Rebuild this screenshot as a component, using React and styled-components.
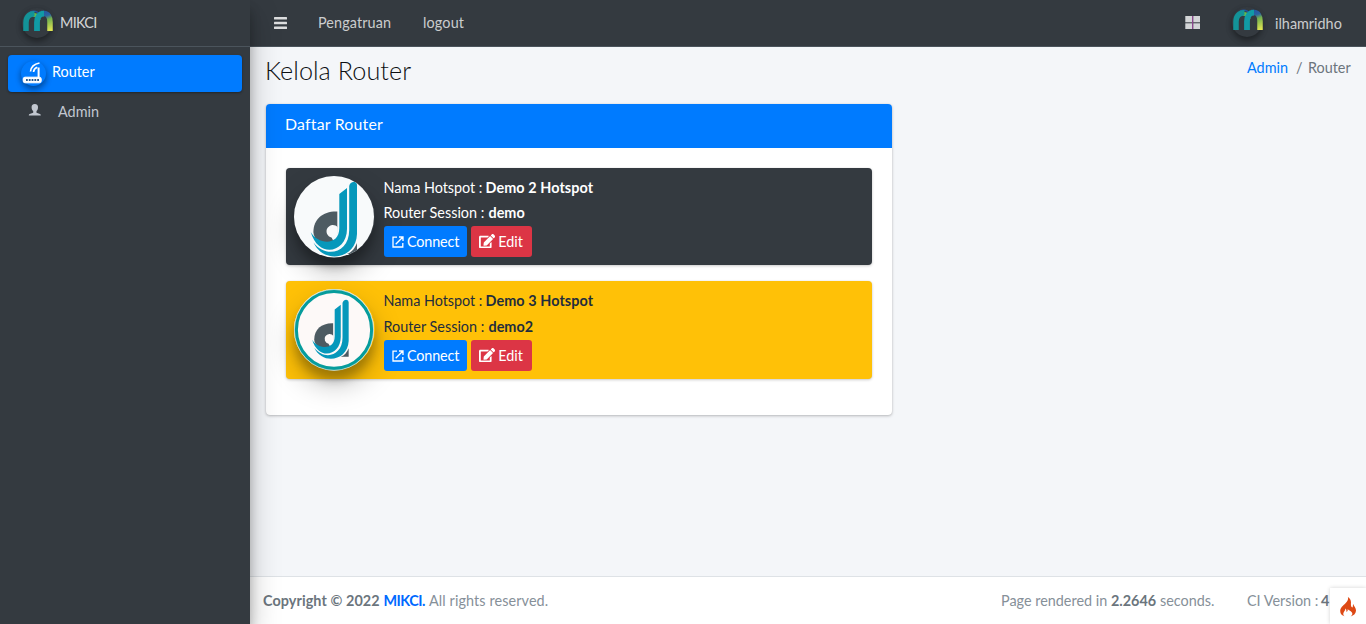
import React from "react";
import styled, { createGlobalStyle } from "styled-components";

const GlobalStyle = createGlobalStyle`
  *, *::before, *::after { box-sizing: border-box; }
  body {
    margin: 0;
    font-family: Lato, "Open Sans", sans-serif;
    font-size: 14.4px;
    line-height: 21.6px;
    color: #212529;
    background: #f4f6f9;
    overflow: hidden;
  }
  a { text-decoration: none; color: #007bff; }
`;

const Page = styled.div`
  display: flex;
  height: 624px;
  width: 1366px;
`;

const Sidebar = styled.aside`
  width: 250px;
  flex: none;
  background: #343a40;
  position: relative;
  z-index: 2;
  box-shadow: 0 14px 28px rgba(0, 0, 0, 0.25), 0 10px 10px rgba(0, 0, 0, 0.22);
`;

const Brand = styled.a`
  display: flex;
  height: 47px;
  padding: 8px 0 0 22px;
  border-bottom: 1px solid #4b545c;
  color: rgba(255, 255, 255, 0.8);
`;

const BrandName = styled.span`
  padding: 4px 0 0 8px;
`;

const Menu = styled.nav`
  display: flex;
  flex-direction: column;
  gap: 3px;
  padding: 8px 8px 0;
`;

const MenuLink = styled.a`
  display: flex;
  height: 37px;
  padding: ${(p) => (p.$active ? "6px 0 0 13px" : "5px 0 0 20px")};
  gap: ${(p) => (p.$active ? "6px" : "16px")};
  border-radius: 4px;
  color: ${(p) => (p.$active ? "#fff" : "#c2c7d0")};
  background: ${(p) => (p.$active ? "#007bff" : "transparent")};
  box-shadow: ${(p) => (p.$active ? "0 1px 3px rgba(0,0,0,.12), 0 1px 2px rgba(0,0,0,.24)" : "none")};
`;

const MenuLabel = styled.span`
  padding-top: ${(p) => p.$top || 0}px;
`;

const RoundPicture = styled.span`
  display: block;
  flex: none;
  width: ${(p) => p.$size}px;
  height: ${(p) => p.$size}px;
  border-radius: 50%;
  box-shadow: ${(p) =>
    p.$deep
      ? "0 14px 28px rgba(0,0,0,.25), 0 10px 10px rgba(0,0,0,.22)"
      : "0 3px 6px rgba(0,0,0,.22), 0 3px 6px rgba(0,0,0,.26)"};
  svg { display: block; }
`;

const Main = styled.div`
  flex: 1;
  display: flex;
  flex-direction: column;
`;

const Navbar = styled.header`
  display: flex;
  height: 47px;
  background: #343a40;
  border-bottom: 1px solid #4b545c;
  padding: 0 24px;
  color: rgba(255, 255, 255, 0.75);
`;

const NavItem = styled.a`
  display: flex;
  padding-top: ${(p) => p.$top ?? 12}px;
  margin-right: ${(p) => p.$gap || 0}px;
  color: inherit;
`;

const Spacer = styled.span`
  flex: 1;
`;

const ContentHeader = styled.div`
  display: flex;
  justify-content: space-between;
  height: 57px;
  padding: 8px 16px 0 15px;
`;

const Title = styled.h1`
  margin: 0;
  font-size: 25.2px;
  font-weight: 300;
  line-height: 30px;
  color: #0c0f12;
`;

const Breadcrumb = styled.nav`
  display: flex;
  padding-top: 2px;
  color: #6c757d;
`;

const Card = styled.section`
  width: 626px;
  height: 311px;
  margin-left: 16px;
  background: #fff;
  border-radius: 4px;
  box-shadow: 0 0 1px rgba(0, 0, 0, 0.125), 0 1px 3px rgba(0, 0, 0, 0.25);
`;

const CardHeader = styled.h3`
  margin: 0;
  height: 44px;
  padding: 8px 19px;
  border-radius: 4px 4px 0 0;
  background: #007bff;
  color: #fff;
  font-size: 15.84px;
  line-height: 24px;
  font-weight: 400;
`;

const CardBody = styled.div`
  display: flex;
  flex-direction: column;
  gap: 16px;
  padding: 20px;
`;

const RouterBox = styled.article`
  display: flex;
  height: ${(p) => (p.$dark ? 97 : 98)}px;
  padding: 8px;
  gap: 9px;
  border-radius: 4px;
  background: ${(p) => (p.$dark ? "#343a40" : "#ffc107")};
  color: ${(p) => (p.$dark ? "#fff" : "#1f2d3d")};
  box-shadow: 0 0 1px rgba(0, 0, 0, 0.125), 0 1px 3px rgba(0, 0, 0, 0.2);
`;

const RouterInfo = styled.div`
  display: flex;
  flex-direction: column;
  padding-top: 1px;
`;

const InfoLine = styled.div`
  height: ${(p) => p.$h || 25}px;
  display: flex;
  margin-left: -0.5px;
`;

const Buttons = styled.div`
  display: flex;
  gap: 4px;
  margin-top: -1px;
`;

const Button = styled.a`
  display: flex;
  width: ${(p) => p.$w}px;
  height: 31px;
  padding: 5px 8px 0;
  border-radius: 3px;
  color: #fff;
  background: ${(p) => (p.$danger ? "#dc3545" : "#007bff")};
  svg { flex: none; margin: ${(p) => (p.$danger ? "3px 3px 0 0" : "5px 3px 0 0")}; }
`;

const Footer = styled.footer`
  display: flex;
  height: 48px;
  margin-top: auto;
  padding: 13px 0 0 13px;
  border-top: 1px solid #dee2e6;
  background: #fff;
  color: #869099;
`;

const Run = styled.span`
  display: inline-block;
  flex: none;
  white-space: nowrap;
  width: ${(p) => p.$w}px;
  letter-spacing: ${(p) => p.$s || 0}px;
  font-weight: ${(p) => (p.$bold ? 700 : "inherit")};
  color: ${(p) => p.$color || "inherit"};
`;

const DebugBadge = styled.span`
  position: absolute;
  left: 1330px;
  top: 588px;
  width: 36px;
  height: 36px;
  z-index: 3;
  padding: 9px 0 0 10px;
  background: #fff;
  box-shadow: 0 0 4px rgba(0, 0, 0, 0.18);
`;

function BrandMark({ id }) {
  return (
    <svg width="32" height="32" viewBox="0 0 32 32" fill="none">
      <defs>
        <linearGradient id={id} gradientUnits="userSpaceOnUse" x1="20" y1="4" x2="27" y2="23">
          <stop offset="0" stopColor="#2358a2" />
          <stop offset=".25" stopColor="#2c62a0" />
          <stop offset=".45" stopColor="#74b04e" />
          <stop offset="1" stopColor="#dfe552" />
        </linearGradient>
      </defs>
      <path d="M11 7C15.5 6.500 16.500 9 16.500 12" stroke="#6cba45" strokeWidth="4" />
      <path d="M8 4C12 2.500 15 3 17 6" stroke="#2355a0" strokeWidth="1.600" />
      <path d="M4 23V14.500C4 9 7 5.700 12.500 5.700" stroke="#139398" strokeWidth="5.500" />
      <path d="M19 5.600H22C26 5.600 28 9 28 14V23" stroke={`url(#${id})`} strokeWidth="5.500" />
      <path d="M15 23V14.500C15 9 17.500 5.700 22 5.700" stroke="#119ba5" strokeWidth="5.800" />
    </svg>
  );
}

function HotspotShape({ paper }) {
  return (
    <>
      <path d="M43.3 35.500V67C33 70 19.400 66 19.400 56C19.400 43 29 35 43.300 35.500Z" fill="#4d5b62" />
      <path d="M43.800 51.500A6.300 6.300 0 1 0 37.500 61.500L39.500 65L44 62Z" fill={paper} />
      <path d="M63 67V78H53C58 76 61 72 63 67Z" fill="#4d5b62" />
      <path d="M45.300 18L53 12V53C53 76 25 84 16.700 56C23 68 45.300 71 45.300 52Z" fill="#0698bb" />
      <path d="M55.200 10Q56 6 60 5.700Q63 6 63 9V58C62 83 30 89 19.500 66.500C32 83 55.200 77 55.200 54Z" fill="#0698bb" />
    </>
  );
}

function HotspotLogo({ ring }) {
  const clip = ring ? "hotspot-ring" : "hotspot-plain";
  const paper = ring ? "#fdf9f8" : "#f8fafb";
  return (
    <svg width="80" height="82" viewBox="0 0 80 82">
      <clipPath id={clip}><ellipse cx="40" cy="40.7" rx="40" ry="40.7" /></clipPath>
      <g clipPath={`url(#${clip})`}>
        <rect width="80" height="82" fill={paper} />
        {ring ? (
          <g transform="translate(4.9 6.2) scale(.79)"><HotspotShape paper={paper} /></g>
        ) : (
          <HotspotShape paper={paper} />
        )}
      </g>
      {ring && (
        <>
          <ellipse cx="40" cy="40.9" rx="37.8" ry="38.6" fill="none" stroke="#069c9c" strokeWidth="3.4" />
          <ellipse cx="40" cy="40.9" rx="39.6" ry="40.4" fill="none" stroke="#d9e3d0" strokeWidth=".7" />
        </>
      )}
    </svg>
  );
}

const RouterIcon = () => (
  <svg width="25" height="25" viewBox="0 0 25 25" fill="none" stroke="#fff">
    <path d="M17.6 6.5V17" strokeWidth="2" />
    <path d="M12.5 11C12.8 8.5 14.2 7 16.3 6.3M9.5 10.5C10 6 13 3 18.5 2" strokeWidth="1.7" />
    <rect x="2.2" y="16.2" width="18" height="5.6" rx="1.8" fill="#fff" strokeWidth="1" />
    <path d="M5 19H18" stroke="#27588d" strokeWidth="1.8" strokeDasharray="1.8 1" />
  </svg>
);

const PersonIcon = () => (
  <svg width="14" height="18" viewBox="0 -4 14 18" fill="#c2c7d0">
    <path d="M6.8 0C9 0 10.2 1.300 10 3.700C9.900 5.200 9.300 6.200 8.500 7V8.800L12 10Q12.800 10.400 12.800 11.500H.8Q.8 10.400 1.600 10L5.200 8.800V7C4.300 6.200 3.700 5.200 3.600 3.700C3.400 1.300 4.600 0 6.800 0Z" />
  </svg>
);

const BarsIcon = () => (
  <svg width="14" height="13" viewBox="0 0 14 13" fill="#dcddde">
    <rect y="0" width="13" height="2.4" rx=".5" />
    <rect y="4.8" width="13" height="2.4" rx=".5" />
    <rect y="9.6" width="13" height="2.4" rx=".5" />
  </svg>
);

const GridIcon = () => (
  <svg width="16" height="14" viewBox="0 0 16 14" fill="#d3d5d7">
    <rect x=".3" width="6.8" height="6.3" /><rect x="8.2" width="6.8" height="6.3" />
    <rect x=".3" y="7.3" width="6.8" height="5.7" /><rect x="8.2" y="7.3" width="6.8" height="5.7" />
    <rect x="7.1" width="1.1" height="13" fill="#954796" />
  </svg>
);

const ConnectIcon = () => (
  <svg width="12" height="12" viewBox="0 0 12 12" fill="none" stroke="#fff" strokeWidth="1.3">
    <path d="M5 1.2H1V11H10.8V7M7 1H11V5M10.7 1.3L3.7 8.3" />
  </svg>
);

const EditIcon = () => (
  <svg width="16.2" height="14.4" viewBox="0 0 576 512" fill="#fff">
    <path d="M402.6 83.2l90.2 90.2c3.8 3.8 3.8 10 0 13.800L274.400 405.600l-92.800 10.300c-12.400 1.400-22.900-9.100-21.500-21.500l10.300-92.800L388.800 83.200c3.800-3.800 10-3.800 13.800 0zm162-22.900l-48.800-48.800c-15.200-15.200-39.900-15.200-55.200 0l-35.400 35.400c-3.800 3.800-3.800 10 0 13.800l90.200 90.200c3.800 3.800 10 3.800 13.800 0l35.400-35.400c15.200-15.300 15.200-40 0-55.200zM384 346.200V448H64V128h229.800c3.200 0 6.200-1.300 8.500-3.500l40-40c7.600-7.600 2.200-20.500-8.500-20.500H48C21.500 64 0 85.500 0 112v352c0 26.500 21.500 48 48 48h352c26.500 0 48-21.500 48-48V306.200c0-10.700-12.900-16-20.500-8.500l-40 40c-2.200 2.300-3.500 5.300-3.500 8.500z" />
  </svg>
);

const FlameIcon = () => (
  <svg width="17" height="20" viewBox="0 0 17 20" fill="#dd4814">
    <path d="M7.900 0C8.600 2.500 7.500 4.200 5.500 6.200C3 8.800 .2 10.500 .2 14C.2 16.700 2 18.700 4.600 19.300C3.200 18.200 2.900 16.600 3.800 15.200C4.500 14 5.500 13.200 5.300 11.600C6.500 12.500 6.600 13.700 6.200 14.800C7.500 14.800 8 13.500 7.500 12.300C10 13.500 12 14.800 12.300 16.300C12.500 17.600 11.700 18.700 10.700 19.400C13.500 18.700 15.800 16.700 16 13.800C16.200 11 14 9.300 13.200 6.900C12.500 8 13.300 9.800 12.300 10.600C10.700 9.800 10.800 7.500 11 5.500C11 3 9.800 1 7.900 0Z" />
  </svg>
);

function RouterEntry({ dark, name, session, nameWidth, sessionWidth }) {
  return (
    <RouterBox $dark={dark}>
      <RoundPicture $size={81} $deep><HotspotLogo ring={!dark} /></RoundPicture>
      <RouterInfo>
        <InfoLine $h={dark ? 25 : 26}>
          <Run $w={102} $s={-0.03}>Nama Hotspot :</Run>
          <Run $w={nameWidth} $bold $s={0.08}>{name}</Run>
        </InfoLine>
        <InfoLine>
          <Run $w={105}>Router Session :</Run>
          <Run $w={sessionWidth} $bold>{session}</Run>
        </InfoLine>
        <Buttons>
          <Button $w={83}><ConnectIcon /><Run $w={52} $s={-0.15}>Connect</Run></Button>
          <Button $w={61} $danger><EditIcon /><Run $w={25}>Edit</Run></Button>
        </Buttons>
      </RouterInfo>
    </RouterBox>
  );
}

export default function App() {
  return (
    <>
      <GlobalStyle />
      <Page>
        <Sidebar>
          <Brand href="#">
            <RoundPicture $size={30}><BrandMark id="brand" /></RoundPicture>
            <BrandName><Run $w={40} $s={-0.65}>MIKCI</Run></BrandName>
          </Brand>
          <Menu>
            <MenuLink href="#" $active>
              <RoundPicture $size={25}><RouterIcon /></RoundPicture>
              <MenuLabel><Run $w={43}>Router</Run></MenuLabel>
            </MenuLink>
            <MenuLink href="#">
              <PersonIcon />
              <MenuLabel $top={1}><Run $w={42}>Admin</Run></MenuLabel>
            </MenuLink>
          </Menu>
        </Sidebar>
        <Main>
          <Navbar>
            <NavItem href="#" $top={17} $gap={30}><BarsIcon /></NavItem>
            <NavItem href="#" $gap={32}><Run $w={73} $s={0.1}>Pengatruan</Run></NavItem>
            <NavItem href="#"><Run $w={41} $s={0.15}>logout</Run></NavItem>
            <Spacer />
            <NavItem href="#" $top={16} $gap={31}><GridIcon /></NavItem>
            <NavItem href="#" $top={7} $gap={13}><RoundPicture $size={30}><BrandMark id="user" /></RoundPicture></NavItem>
            <NavItem href="#" $top={13}><Run $w={67}>ilhamridho</Run></NavItem>
          </Navbar>
          <ContentHeader>
            <Title><Run $w={146} $s={0.06}>Kelola Router</Run></Title>
            <Breadcrumb>
              <a href="#"><Run $w={49}>Admin</Run></a>
              <Run $w={12}>/</Run>
              <Run $w={42}>Router</Run>
            </Breadcrumb>
          </ContentHeader>
          <Card>
            <CardHeader><Run $w={98} $s={0.22}>Daftar Router</Run></CardHeader>
            <CardBody>
              <RouterEntry dark name="Demo 2 Hotspot" session="demo" nameWidth={108} sessionWidth={37} />
              <RouterEntry name="Demo 3 Hotspot" session="demo2" nameWidth={108} sessionWidth={45} />
            </CardBody>
          </Card>
          <Footer>
            <Run $w={120.5} $bold $color="#6b757d" $s={0.08}>Copyright © 2022</Run>
            <Run $w={45.5} $bold $color="#0069ff" $s={-0.5}>MIKCI.</Run>
            <Run $w={119} $s={0.1}>All rights reserved.</Run>
            <Spacer />
            <Run $w={110}>Page rendered in</Run>
            <Run $w={49} $bold $color="#6b757d">2.2646</Run>
            <Run $w={87}>seconds.</Run>
            <Run $w={74}>CI Version :</Run>
            <Run $w={45} $bold $color="#6b757d">4</Run>
          </Footer>
        </Main>
        <DebugBadge><FlameIcon /></DebugBadge>
      </Page>
    </>
  );
}
